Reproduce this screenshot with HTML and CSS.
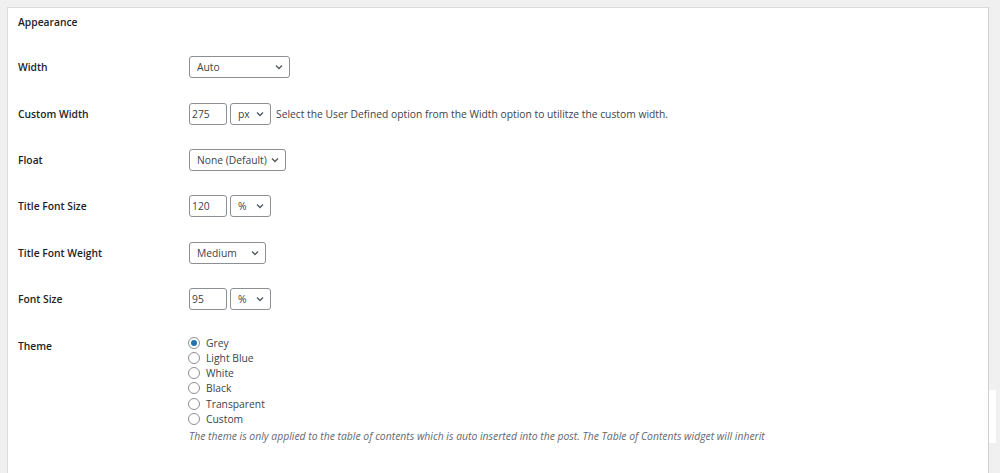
FILE: index.html
```html
<!DOCTYPE html>
<html lang="en">
<head>
  <meta charset="UTF-8">
  <meta name="viewport" content="width=device-width, initial-scale=1.0">
  <title>Appearance Settings</title>
  <link rel="stylesheet" href="styles.css">
</head>
<body>
  <div class="settings-card">
    <h2 class="section-title">Appearance</h2>

    <div class="form-row">
      <div class="form-label">Width</div>
      <div class="form-field">
        <select class="select w-width">
          <option>Auto</option>
        </select>
      </div>
    </div>

    <div class="form-row">
      <div class="form-label">Custom Width</div>
      <div class="form-field">
        <input type="text" class="text-input" value="275">
        <select class="select w-unit">
          <option>px</option>
        </select>
        <span class="field-note">Select the User Defined option from the Width option to utilitze the custom width.</span>
      </div>
    </div>

    <div class="form-row">
      <div class="form-label">Float</div>
      <div class="form-field">
        <select class="select w-float">
          <option>None (Default)</option>
        </select>
      </div>
    </div>

    <div class="form-row">
      <div class="form-label">Title Font Size</div>
      <div class="form-field">
        <input type="text" class="text-input" value="120">
        <select class="select w-unit">
          <option>%</option>
        </select>
      </div>
    </div>

    <div class="form-row">
      <div class="form-label">Title Font Weight</div>
      <div class="form-field">
        <select class="select w-weight">
          <option>Medium</option>
        </select>
      </div>
    </div>

    <div class="form-row">
      <div class="form-label">Font Size</div>
      <div class="form-field">
        <input type="text" class="text-input" value="95">
        <select class="select w-unit">
          <option>%</option>
        </select>
      </div>
    </div>

    <div class="form-row theme-row">
      <div class="form-label">Theme</div>
      <div class="form-field radio-list">
        <label class="radio-item"><input type="radio" name="theme" checked> Grey</label>
        <label class="radio-item"><input type="radio" name="theme"> Light Blue</label>
        <label class="radio-item"><input type="radio" name="theme"> White</label>
        <label class="radio-item"><input type="radio" name="theme"> Black</label>
        <label class="radio-item"><input type="radio" name="theme"> Transparent</label>
        <label class="radio-item"><input type="radio" name="theme"> Custom</label>
        <p class="description">The theme is only applied to the table of contents which is auto inserted into the post. The Table of Contents widget will inherit</p>
      </div>
    </div>

    <div class="edge-patch"></div>
  </div>
</body>
</html>
```

FILE: styles.css
```css
body {
  margin: 0;
  background-color: #f0f0f1;
  font-family: "Open Sans", "Noto Sans", sans-serif;
  font-size: 10.3px;
  color: #2c3338;
}

.settings-card {
  position: relative;
  margin: 7px 0 0 7px;
  width: 970px;
  height: 480px;
  background-color: #fff;
  border: 1px solid #dcdcde;
  border-right-color: #d0d0d2;
  padding: 0 0 0 10px;
}

.section-title {
  margin: 0;
  padding-top: 7px;
  height: 29px;
  line-height: 15px;
  font-size: 10.3px;
  font-weight: 600;
  color: #1d2327;
}

.form-row {
  display: grid;
  grid-template-columns: 171px 1fr;
  padding: 12.2px 0;
}

.form-label {
  line-height: 22px;
  font-size: 10.3px;
  font-weight: 600;
  color: #1d2327;
}

.form-field {
  display: flex;
  align-items: center;
  gap: 3px;
}

.select,
.text-input {
  box-sizing: border-box;
  height: 22px;
  margin: 0;
  border: 1px solid #8c8f94;
  border-radius: 3px;
  background-color: #fff;
  font-family: inherit;
  font-size: 10.3px;
  color: #3c434a;
}

.text-input {
  width: 38px;
  padding: 0 2px;
  outline: none;
}

.select {
  -webkit-appearance: none;
  appearance: none;
  padding: 0 16px 0 7px;
  background-image: url("data:image/svg+xml;utf8,<svg xmlns='http://www.w3.org/2000/svg' width='8' height='6' viewBox='0 0 8 6'><polyline points='1,1.5 4,4.5 7,1.5' fill='none' stroke='%2350575e' stroke-width='1.3'/></svg>");
  background-repeat: no-repeat;
  background-position: right 6px center;
  background-size: 8px 6px;
}

.w-width { width: 101px; }
.w-unit { width: 41px; }
.w-float { width: 97px; padding-right: 14px; }
.w-weight { width: 77px; }

.field-note {
  margin-left: 2px;
  color: #3c434a;
}

.theme-row {
  padding-top: 13px;
}

.theme-row .form-label {
  line-height: 15px;
  padding-top: 4px;
}

.radio-list {
  flex-direction: column;
  align-items: flex-start;
  gap: 0;
}

.radio-item {
  display: flex;
  align-items: center;
  height: 15.2px;
  color: #3c434a;
}

.radio-item input {
  -webkit-appearance: none;
  appearance: none;
  box-sizing: border-box;
  width: 12px;
  height: 12px;
  margin: 0 6px 0 -1px;
  border: 1px solid #8c8f94;
  border-radius: 50%;
  background-color: #fff;
  position: relative;
}

.radio-item input:checked::before {
  content: "";
  position: absolute;
  left: 2px;
  top: 2px;
  width: 6px;
  height: 6px;
  border-radius: 50%;
  background-color: #2271b1;
}

.description {
  margin: 3px 0 0;
  font-style: italic;
  font-size: 10.4px;
  color: #646970;
  line-height: 15px;
}

.edge-patch {
  position: absolute;
  right: -8px;
  top: 382px;
  width: 7px;
  height: 53px;
  background-color: #fff;
}
```
